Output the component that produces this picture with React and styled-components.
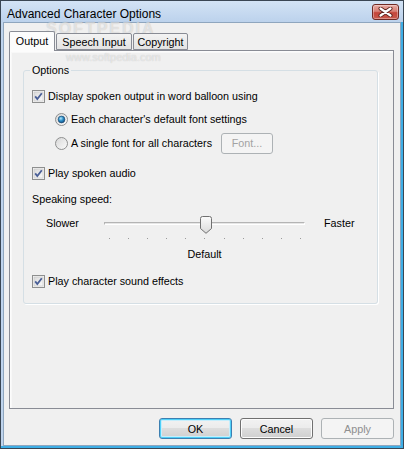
import styled, { createGlobalStyle } from 'styled-components';

const GlobalStyle = createGlobalStyle`
  html, body {
    margin: 0;
    padding: 0;
  }
  body {
    width: 404px;
    height: 449px;
    overflow: hidden;
    font-family: "Liberation Sans", Arial, sans-serif;
    font-size: 10.75px;
    color: #000;
  }
`;

const Window = styled.div`
  position: relative;
  width: 404px;
  height: 449px;
  box-sizing: border-box;
  display: flex;
  flex-direction: column;
  border: 1px solid #3a4653;
  background: #bfd4ed;
  box-shadow: inset -2px -2px 0 #3eaee6;
`;

const TitleBar = styled.div`
  height: 21px;
  display: flex;
  align-items: flex-start;
  padding-left: 6px;
  background: linear-gradient(#d3e3f5, #bcd2ec);
`;

const Title = styled.span`
  font-size: 12px;
  line-height: 14px;
  margin-top: 6px;
  flex: 1;
`;

const CloseButton = styled.div`
  width: 27px;
  height: 16px;
  margin: 3px 4px 0 0;
  box-sizing: border-box;
  border: 1px solid #6f2a24;
  border-radius: 3px;
  background: linear-gradient(#e8aba4 0%, #d77f75 45%, #c4453a 55%, #c9594c 100%);
  box-shadow: inset 0 0 0 1px rgba(255, 255, 255, 0.35);
  display: flex;
  align-items: center;
  justify-content: center;
`;

const Client = styled.div`
  flex: 1;
  margin: 0 2px 2px 2px;
  border: 1px solid #8fa6be;
  background: #f0f0f0;
  padding: 8px 6px 6px 5px;
  display: flex;
  flex-direction: column;
`;

const TabStrip = styled.div`
  display: flex;
  align-items: flex-end;
  height: 19px;
  position: relative;
  z-index: 1;
`;

const Tab = styled.div`
  box-sizing: border-box;
  width: ${(p) => p.$width}px;
  height: ${(p) => (p.$active ? 20 : 17)}px;
  margin-bottom: ${(p) => (p.$active ? -1 : 0)}px;
  margin-right: 1px;
  border: 1px solid #898c95;
  border-bottom: ${(p) => (p.$active ? 'none' : '1px solid #898c95')};
  border-radius: 2px 2px 0 0;
  background: ${(p) => (p.$active ? '#fcfcfc' : 'linear-gradient(#f3f3f3, #e3e3e3)')};
  display: flex;
  align-items: center;
  justify-content: center;
  padding-bottom: ${(p) => (p.$active ? 2 : 0)}px;
`;

const Panel = styled.div`
  box-sizing: border-box;
  height: 359px;
  border: 1px solid #898c95;
  background: #f0f0f0;
  box-shadow: inset 1px 1px 0 #fcfcfc, inset 2px 2px 0 #f8f8f8;
  padding: 13px 0 0 13px;
`;

const GroupBox = styled.fieldset`
  width: 355px;
  box-sizing: border-box;
  margin: 0;
  padding: 9px 8px 12px 8px;
  border: 1px solid #d5dfe5;
  border-radius: 3px;
  box-shadow: 1px 1px 0 #fff;
`;

const Legend = styled.legend`
  padding: 0 2px;
  margin-left: -2px;
  line-height: 13px;
`;

const Row = styled.div`
  display: flex;
  align-items: center;
  height: 20px;
  margin-top: ${(p) => p.$top || 0}px;
  padding-left: ${(p) => p.$indent || 0}px;
`;

const Label = styled.span`
  margin-left: ${(p) => (p.$flush ? 0 : 3)}px;
  white-space: nowrap;
`;

const SmallButton = styled.div`
  box-sizing: border-box;
  width: 52px;
  height: 21px;
  margin-left: 9px;
  border: 1px solid #adb2b5;
  border-radius: 3px;
  background: #f4f4f4;
  color: #a3a3a3;
  display: flex;
  align-items: center;
  justify-content: center;
`;

const SliderRow = styled.div`
  display: flex;
  align-items: center;
  height: 20px;
  margin-top: 4px;
`;

const SpeedLabel = styled.span`
  width: ${(p) => p.$width || 'auto'};
  margin-left: ${(p) => p.$left}px;
`;

const Track = styled.div`
  position: relative;
  width: 201px;
  height: 3px;
  box-sizing: border-box;
  border: 1px solid #b4b4b4;
  border-right-color: #fff;
  border-bottom-color: #fff;
  background: #e6e6e6;
`;

const Thumb = styled.svg`
  position: absolute;
  top: -7px;
`;

const TickRow = styled.div`
  width: 201px;
  box-sizing: border-box;
  margin: 5px 0 0 72px;
  padding: 0 4px 0 5px;
  display: flex;
  justify-content: space-between;
  height: 1px;
`;

const Tick = styled.span`
  width: 1px;
  height: 1px;
  background: #9a9a9a;
`;

const DefaultLabel = styled.div`
  width: 201px;
  margin: 7px 0 0 72px;
  line-height: 16px;
  text-align: center;
`;

const ButtonRow = styled.div`
  display: flex;
  justify-content: flex-end;
  gap: 8px;
  margin-top: 9px;
`;

const DialogButton = styled.div`
  box-sizing: border-box;
  width: 73px;
  height: 21px;
  border-radius: 3px;
  display: flex;
  align-items: center;
  justify-content: center;
  border: 1px solid ${(p) => (p.$default ? '#3c7fb1' : p.$disabled ? '#adb2b5' : '#707070')};
  color: ${(p) => (p.$disabled ? '#8f8f8f' : '#000')};
  background: ${(p) =>
    p.$disabled ? '#f4f4f4' : 'linear-gradient(#f2f2f2 0%, #ebebeb 50%, #dddddd 50%, #cfcfcf 100%)'};
  box-shadow: ${(p) =>
    p.$disabled ? 'none' : p.$default ? 'inset 0 0 0 1px #4fd0f8, inset 0 0 0 2px #c6eefc' : 'inset 0 0 0 1px #fcfcfc'};
`;

const Watermark = styled.div`
  position: absolute;
  left: ${(p) => p.$x}px;
  top: ${(p) => p.$y}px;
  font-size: ${(p) => p.$size}px;
  line-height: ${(p) => p.$size - 5}px;
  font-weight: ${(p) => (p.$bold ? 'bold' : 'normal')};
  letter-spacing: ${(p) => p.$spacing || 0}px;
  color: rgba(255, 255, 255, 0.55);
  text-shadow: 0 0 1px rgba(0, 0, 0, 0.22);
  pointer-events: none;
`;

const CheckBox = ({ checked }) => (
  <svg width="13" height="13" viewBox="0 0 13 13">
    <defs>
      <linearGradient id="cbfill" x1="0" y1="0" x2="1" y2="1">
        <stop offset="0" stopColor="#d9d9d9" />
        <stop offset="1" stopColor="#fbfbfb" />
      </linearGradient>
    </defs>
    <rect x="0.5" y="0.5" width="12" height="12" fill="#f4f4f4" stroke="#8e8f8f" />
    <rect x="2" y="2" width="9" height="9" fill="url(#cbfill)" stroke="#c6c6c6" strokeWidth="0.6" />
    {checked && <path d="M3.2 6.4 L5.3 9 L9.8 3.2" fill="none" stroke="#4a5f97" strokeWidth="1.8" />}
  </svg>
);

const Radio = ({ checked }) => (
  <svg width="13" height="13" viewBox="0 0 13 13">
    <defs>
      <linearGradient id="rbfill" x1="0" y1="0" x2="1" y2="1">
        <stop offset="0" stopColor="#d6d6d6" />
        <stop offset="1" stopColor="#fcfcfc" />
      </linearGradient>
      <radialGradient id="rbdot" cx="0.4" cy="0.35" r="0.7">
        <stop offset="0" stopColor="#b4e8fd" />
        <stop offset="0.5" stopColor="#2b8dc6" />
        <stop offset="1" stopColor="#124b80" />
      </radialGradient>
    </defs>
    <circle cx="6.5" cy="6.5" r="6" fill="url(#rbfill)" stroke="#8e8f8f" />
    {checked && <circle cx="6.5" cy="6.5" r="3.4" fill="url(#rbdot)" stroke="#1a3f66" strokeWidth="0.6" />}
  </svg>
);

const SpeedSlider = ({ value, steps }) => {
  const spacing = 192 / steps;
  return (
    <>
      <SliderRow>
        <SpeedLabel $left={14} $width="58px">Slower</SpeedLabel>
        <Track>
          <Thumb width="12" height="18" viewBox="0 0 12 18" style={{ left: 5 + value * spacing - 6.5 }}>
            <defs>
              <linearGradient id="thumb" x1="0" y1="0" x2="0" y2="1">
                <stop offset="0" stopColor="#fbfbfb" />
                <stop offset="1" stopColor="#dadada" />
              </linearGradient>
            </defs>
            <path
              d="M0.5 2.5 Q0.5 0.5 2.5 0.5 H9.5 Q11.5 0.5 11.5 2.5 V12.5 L6 17.3 L0.5 12.5 Z"
              fill="url(#thumb)"
              stroke="#707070"
            />
          </Thumb>
        </Track>
        <SpeedLabel $left={19}>Faster</SpeedLabel>
      </SliderRow>
      <TickRow>
        {Array.from({ length: steps + 1 }, (_, i) => (
          <Tick key={i} />
        ))}
      </TickRow>
      <DefaultLabel>Default</DefaultLabel>
    </>
  );
};

const App = () => {
  return (
    <>
      <GlobalStyle />
      <Window>
        <TitleBar>
          <Title>Advanced Character Options</Title>
          <CloseButton>
            <svg width="15" height="10" viewBox="0 0 15 10">
              <path d="M2.5 1.5 L12.5 8.5 M12.5 1.5 L2.5 8.5" stroke="#5a1f1a" strokeWidth="4" strokeLinecap="round" />
              <path d="M2.5 1.5 L12.5 8.5 M12.5 1.5 L2.5 8.5" stroke="#fff" strokeWidth="2.2" strokeLinecap="round" />
            </svg>
          </CloseButton>
        </TitleBar>
        <Client>
          <TabStrip>
            <Tab $active $width={46}>Output</Tab>
            <Tab $width={76}>Speech Input</Tab>
            <Tab $width={55}>Copyright</Tab>
          </TabStrip>
          <Panel>
            <GroupBox>
              <Legend>Options</Legend>
              <Row>
                <CheckBox checked />
                <Label>Display spoken output in word balloon using</Label>
              </Row>
              <Row $top={3} $indent={23}>
                <Radio checked />
                <Label>Each character's default font settings</Label>
              </Row>
              <Row $top={4} $indent={23}>
                <Radio />
                <Label>A single font for all characters</Label>
                <SmallButton>Font...</SmallButton>
              </Row>
              <Row $top={10}>
                <CheckBox checked />
                <Label>Play spoken audio</Label>
              </Row>
              <Row $top={6}>
                <Label $flush>Speaking speed:</Label>
              </Row>
              <SpeedSlider value={5} steps={10} />
              <Row $top={9}>
                <CheckBox checked />
                <Label>Play character sound effects</Label>
              </Row>
            </GroupBox>
          </Panel>
          <ButtonRow>
            <DialogButton $default>OK</DialogButton>
            <DialogButton>Cancel</DialogButton>
            <DialogButton $disabled>Apply</DialogButton>
          </ButtonRow>
        </Client>
        <Watermark $x={45} $y={22} $size={16} $bold $spacing={2}>
          SOFTPEDIA
        </Watermark>
        <Watermark $x={65} $y={53} $size={11}>
          www.softpedia.com
        </Watermark>
      </Window>
    </>
  );
};

export default App;
